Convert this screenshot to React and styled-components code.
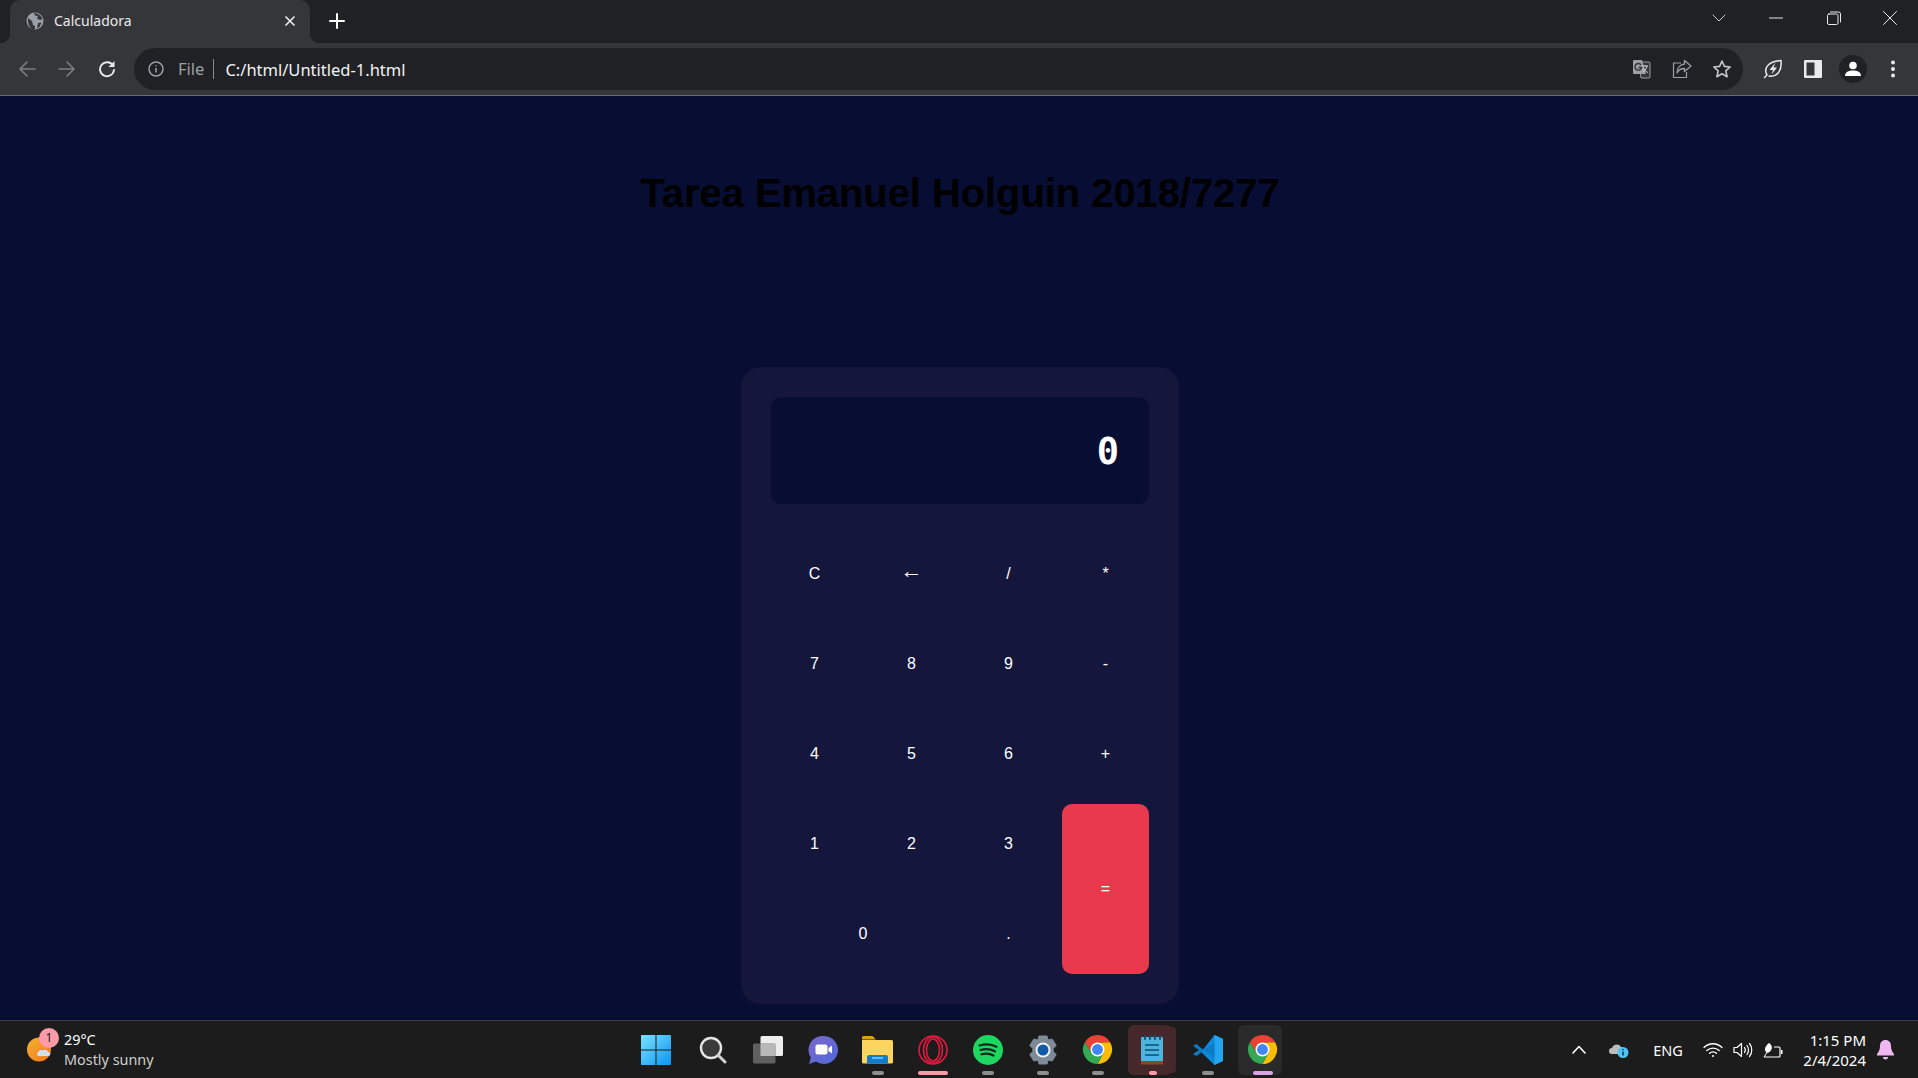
import React from 'react';
import styled, { createGlobalStyle } from 'styled-components';

const GlobalStyle = createGlobalStyle`
    html, body {
        margin: 0;
        height: 100%;
        overflow: hidden;
        background: #070d33;
    }
    * { box-sizing: border-box; }
`;

const uiFont = `"Noto Sans", "Open Sans", sans-serif`;

//#region browser frame
const Screen = styled.div`
    display: flex;
    flex-direction: column;
    height: 100vh;
    font-family: ${uiFont};
`;

const TabStrip = styled.div`
    display: flex;
    align-items: flex-end;
    height: 43px;
    padding-left: 10px;
    background: #202124;
`;

const Tab = styled.div`
    position: relative;
    display: flex;
    align-items: center;
    width: 300px;
    height: 43px;
    padding: 0 14px 2px 16px;
    background: #35363a;
    border-radius: 10px 10px 0 0;
    color: #e8eaed;
    font-size: 14px;

    &::before, &::after {
        content: "";
        position: absolute;
        bottom: 0;
        width: 10px;
        height: 10px;
    }
    &::before {
        left: -10px;
        background: radial-gradient(circle at 0 0, #202124 10px, #35363a 10.5px);
    }
    &::after {
        right: -10px;
        background: radial-gradient(circle at 100% 0, #202124 10px, #35363a 10.5px);
    }
`;

const TabTitle = styled.span`
    flex: 1;
    margin-left: 10px;
`;

const NewTab = styled.div`
    display: flex;
    align-items: center;
    justify-content: center;
    width: 34px;
    height: 43px;
    margin-left: 10px;
    padding-bottom: 2px;
`;

const WindowControls = styled.div`
    display: flex;
    align-self: stretch;
    margin-left: auto;
`;

const WindowButton = styled.div`
    display: flex;
    align-items: center;
    justify-content: center;
    width: ${(p) => p.$width || 56}px;
    height: 36px;
`;

const Toolbar = styled.div`
    display: flex;
    align-items: center;
    height: 53px;
    padding: 0 5px 0 7px;
    background: #35363a;
    border-bottom: 1px solid #6b6c72;
`;

const ToolButton = styled.div`
    display: flex;
    align-items: center;
    justify-content: center;
    flex: none;
    width: 40px;
    height: 40px;
`;

const Omnibox = styled.div`
    display: flex;
    flex: 1;
    align-items: center;
    height: 42px;
    margin: 0 10px 0 7px;
    background: #202124;
    border-radius: 21px;
`;

const InfoSlot = styled.div`
    display: flex;
    align-items: center;
    justify-content: center;
    width: 44px;
`;

const FileLabel = styled.span`
    padding-right: 9px;
    border-right: 1px solid #8a8c90;
    color: #9aa0a6;
    font-size: 16.5px;
    line-height: 20px;
`;

const UrlText = styled.span`
    margin-left: 11px;
    color: #f1f3f4;
    font-size: 16.5px;
`;

const OmniActions = styled.div`
    display: flex;
    margin-left: auto;
    padding-right: 1px;
`;

const Avatar = styled.div`
    display: flex;
    align-items: center;
    justify-content: center;
    width: 28px;
    height: 28px;
    background: #202124;
    border-radius: 50%;
`;
//#endregion

//#region calculator page
const Page = styled.main`
    flex: 1;
    min-height: 0;
    padding-left: 2px;
    background: #070d33;
    font-family: "Liberation Sans", Arial, sans-serif;
`;

const Heading = styled.h1`
    margin: 74px 0 151px;
    color: #000;
    font-size: 39.85px;
    line-height: 46px;
    font-weight: 700;
    text-align: center;
`;

const Calculator = styled.div`
    width: 438px;
    margin: 0 auto;
    padding: 30px;
    background: #14163b;
    border-radius: 20px;
`;

const Display = styled.div`
    display: flex;
    align-items: center;
    justify-content: flex-end;
    height: 107px;
    margin-bottom: 30px;
    padding: 2px 30px 0 0;
    background: #070d33;
    border-radius: 10px;
    color: #fff;
    font-family: "DejaVu Sans Mono", "Liberation Mono", monospace;
    font-size: 37px;
    font-weight: 700;
`;

const Keys = styled.div`
    display: grid;
    grid-template-columns: repeat(4, 87px);
    grid-auto-rows: 80px;
    gap: 10px;
`;

const Key = styled.button`
    grid-column: span ${(p) => p.$cols || 1};
    grid-row: span ${(p) => p.$rows || 1};
    padding: 0 0 ${(p) => p.$lift || 0}px;
    border: none;
    border-radius: 10px;
    background: ${(p) => (p.$accent ? '#e9394c' : 'transparent')};
    color: #fff;
    font-family: "Liberation Sans", Arial, sans-serif;
    font-size: ${(p) => p.$size || 16}px;
`;
//#endregion

//#region taskbar
const Taskbar = styled.footer`
    display: grid;
    grid-template-columns: 1fr 660px 1fr;
    align-items: center;
    height: 58px;
    padding-left: 2px;
    background: #1c1c1c;
    border-top: 1px solid #3e3e3e;
`;

const Weather = styled.div`
    display: flex;
    align-items: center;
    padding-left: 25px;
`;

const WeatherIcon = styled.div`
    position: relative;
    width: 24px;
    height: 25px;
    margin-right: 13px;
`;

const Badge = styled.span`
    position: absolute;
    top: -9px;
    left: 12px;
    width: 20px;
    height: 20px;
    background: #ff9aa8;
    border-radius: 50%;
    color: #1c1c1c;
    font-size: 12px;
    line-height: 20px;
    text-align: center;
`;

const WeatherText = styled.div`
    display: flex;
    flex-direction: column;
    color: #fff;
    font-size: 14.4px;
    line-height: 20px;
`;

const WeatherNote = styled.span`
    color: #cfcfcf;
`;

const AppList = styled.div`
    display: flex;
    height: 100%;
`;

const AppItem = styled.div`
    position: relative;
    display: flex;
    align-items: center;
    justify-content: center;
    width: 55px;
    height: 100%;
    padding-right: ${(p) => p.$nudge || 0}px;

    ${(p) => p.$tile && `
        &::before {
            content: "";
            position: absolute;
            top: 4px;
            left: 3px;
            width: 44px;
            height: 50px;
            border-radius: 6px;
            background: ${p.$tile};
            ${p.$stacked ? `box-shadow: 6px 0 0 -2px ${p.$tile};` : ''}
        }
    `}
    & > svg { position: relative; }
`;

const Pill = styled.span`
    position: absolute;
    bottom: 3px;
    left: 50%;
    width: ${(p) => p.$width || 12}px;
    height: 4px;
    margin-left: ${(p) => -(p.$width || 12) / 2}px;
    background: ${(p) => p.$color || '#8e8e8e'};
    border-radius: 2px;
`;

const Tray = styled.div`
    display: flex;
    align-items: center;
    justify-content: flex-end;
    padding-right: 14px;
    color: #fff;
`;

const TrayItem = styled.div`
    display: flex;
    align-items: center;
    justify-content: center;
    width: ${(p) => p.$width}px;
    font-size: 14.5px;
`;

const Clock = styled.div`
    width: 78px;
    font-size: 15px;
    line-height: 20px;
    text-align: right;
    white-space: nowrap;
`;
//#endregion

const ChromeLogo = () => (
    <svg width="31" height="31" viewBox="0 0 32 32">
        <path d="M3 8.5A15 15 0 0 1 29 8.5L16 9 9.9 19.5Z" fill="#ea4335" />
        <path d="M29 8.5A15 15 0 0 1 16 31L22.1 19.5 16 9Z" fill="#fbbc04" />
        <path d="M16 31A15 15 0 0 1 3 8.5L9.9 19.5 22.1 19.5Z" fill="#34a853" />
        <circle cx="16" cy="16" r="7.2" fill="#fff" />
        <circle cx="16" cy="16" r="5.6" fill="#4285f4" />
    </svg>
);

const keys = [
    { label: 'C' }, { label: '←', size: 22, lift: 6 }, { label: '/' }, { label: '*' },
    { label: '7' }, { label: '8' }, { label: '9' }, { label: '-' },
    { label: '4' }, { label: '5' }, { label: '6' }, { label: '+' },
    { label: '1' }, { label: '2' }, { label: '3' }, { label: '=', rows: 2, accent: true },
    { label: '0', cols: 2 }, { label: '.' },
];

const line = { fill: 'none', stroke: 'currentColor', strokeLinecap: 'round', strokeLinejoin: 'round' };

export default function App() {
    return (
        <Screen>
            <GlobalStyle />
            <TabStrip>
                <Tab>
                    <svg width="18" height="18" viewBox="0 0 18 18">
                        <circle cx="9" cy="9" r="8.5" fill="#9aa0a6" />
                        <path d="M2 6l4 3 1 4 2 1v3l-2 .5C4 16 1.5 12 2 6zM8 1l1 2.5 3 .5-1 2.5 3 1.5 2.5-1C15.5 4 12 1 8 1zM12 11l3.5-.5-2 4.5-2.5 1z" fill="#35363a" />
                    </svg>
                    <TabTitle>Calculadora</TabTitle>
                    <svg width="12" height="12" viewBox="0 0 12 12" style={{ color: '#e8eaed' }}>
                        <path d="M2 2l8 8M10 2l-8 8" {...line} strokeWidth="1.7" />
                    </svg>
                </Tab>
                <NewTab>
                    <svg width="16" height="16" viewBox="0 0 16 16" style={{ color: '#fff' }}>
                        <path d="M8 1v14M1 8h14" {...line} strokeWidth="2" />
                    </svg>
                </NewTab>
                <WindowControls>
                    <WindowButton $width={56}>
                        <svg width="14" height="8" viewBox="0 0 14 8" style={{ color: '#c8c9cb' }}>
                            <path d="M1 1l6 6 6-6" {...line} strokeWidth="1" />
                        </svg>
                    </WindowButton>
                    <WindowButton $width={58}>
                        <svg width="14" height="2" viewBox="0 0 14 2" style={{ color: '#e8eaed' }}>
                            <path d="M0 1h14" {...line} strokeLinecap="butt" strokeWidth="1" />
                        </svg>
                    </WindowButton>
                    <WindowButton $width={57}>
                        <svg width="14" height="14" viewBox="0 0 14 14" style={{ color: '#e8eaed' }}>
                            <rect x=".5" y="3" width="10.5" height="10.5" rx="1.5" {...line} strokeWidth="1" />
                            <path d="M3.5 1h8a2 2 0 0 1 2 2v8" {...line} strokeWidth="1" />
                        </svg>
                    </WindowButton>
                    <WindowButton $width={56}>
                        <svg width="14" height="14" viewBox="0 0 14 14" style={{ color: '#e8eaed' }}>
                            <path d="M.5.5l13 13M13.5.5l-13 13" {...line} strokeWidth="1" />
                        </svg>
                    </WindowButton>
                </WindowControls>
            </TabStrip>

            <Toolbar>
                <ToolButton>
                    <svg width="18" height="18" viewBox="0 0 18 18" style={{ color: '#7d7f83' }}>
                        <path d="M17 9H2M9 2L2 9l7 7" {...line} strokeWidth="1.6" />
                    </svg>
                </ToolButton>
                <ToolButton>
                    <svg width="18" height="18" viewBox="0 0 18 18" style={{ color: '#7d7f83' }}>
                        <path d="M1 9h15M9 2l7 7-7 7" {...line} strokeWidth="1.6" />
                    </svg>
                </ToolButton>
                <ToolButton>
                    <svg width="18" height="18" viewBox="0 0 18 18" style={{ color: '#e8eaed' }}>
                        <path d="M15 5.5A7 7 0 1 0 16 10" {...line} strokeWidth="1.9" />
                        <path d="M16.5 1v6h-6z" fill="currentColor" />
                    </svg>
                </ToolButton>
                <Omnibox>
                    <InfoSlot>
                        <svg width="16" height="16" viewBox="0 0 16 16" style={{ color: '#9aa0a6' }}>
                            <circle cx="8" cy="8" r="7" {...line} strokeWidth="1.5" />
                            <path d="M8 7v4.5M8 4.2v1" {...line} strokeLinecap="butt" strokeWidth="1.6" />
                        </svg>
                    </InfoSlot>
                    <FileLabel>File</FileLabel>
                    <UrlText>C:/html/Untitled-1.html</UrlText>
                    <OmniActions>
                        <ToolButton>
                            <svg width="20" height="20" viewBox="0 0 20 20">
                                <path d="M7 3h10a1 1 0 0 1 1 1v14a1 1 0 0 1-1 1H9z" fill="#35363a" stroke="#9aa0a6" strokeWidth="1" />
                                <path d="M2 1h8l4 14H2a1 1 0 0 1-1-1V2a1 1 0 0 1 1-1z" fill="#9aa0a6" />
                                <path d="M10 7h6M13 6v1M15 7c-.5 3-2.5 5-4 6M11.5 9c.5 2 2.5 3.5 4.5 4.5" fill="none" stroke="#dadce0" strokeWidth="1" />
                                <path d="M9 6a3.3 3.3 0 1 0 .5 2.5H6.500" fill="none" stroke="#35363a" strokeWidth="1.4" />
                            </svg>
                        </ToolButton>
                        <ToolButton>
                            <svg width="20" height="20" viewBox="0 0 20 20" style={{ color: '#9aa0a6' }}>
                                <path d="M9 4H1.5v14.5h13V13" {...line} strokeLinecap="butt" strokeLinejoin="miter" strokeWidth="1.2" />
                                <path d="M12.5 1.5l6.5 5.5-6.500 5.500V9.500C9 9.500 6.500 11 5 14c0-5 3-8.500 7.500-9z" {...line} strokeWidth="1.3" />
                            </svg>
                        </ToolButton>
                        <ToolButton>
                            <svg width="20" height="20" viewBox="0 0 20 20" style={{ color: '#c4c7cb' }}>
                                <path d="M10 2l2.400 5.400 5.800.6-4.400 3.900 1.300 5.800L10 14.700l-5.100 3 1.300-5.800L1.800 8l5.800-.6z" {...line} strokeWidth="1.6" />
                            </svg>
                        </ToolButton>
                    </OmniActions>
                </Omnibox>
                <ToolButton>
                    <svg width="20" height="20" viewBox="0 0 20 20" style={{ color: '#e8eaed' }}>
                        <path d="M1.5 18.5C3 17 3.5 16.5 4 16 .5 10 4 2.500 18 1.500c1 9-3 17-12 15.500" {...line} strokeWidth="1.5" />
                        <path d="M12.500 3.500L6.500 11h3.500l-1.500 4.500 5.500-7h-3.500z" fill="currentColor" />
                    </svg>
                </ToolButton>
                <ToolButton>
                    <svg width="18" height="18" viewBox="0 0 18 18">
                        <rect width="18" height="18" rx="1" fill="#e8eaed" />
                        <rect x="2.5" y="2.5" width="8" height="13" fill="#35363a" />
                    </svg>
                </ToolButton>
                <ToolButton>
                    <Avatar>
                        <svg width="16" height="16" viewBox="0 0 16 16">
                            <circle cx="8" cy="4.5" r="3.8" fill="#fff" />
                            <path d="M0 15c0-4 3.5-5.500 8-5.500s8 1.500 8 5.500z" fill="#fff" />
                        </svg>
                    </Avatar>
                </ToolButton>
                <ToolButton>
                    <svg width="6" height="18" viewBox="0 0 6 18">
                        <circle cx="3" cy="2.5" r="2" fill="#e8eaed" />
                        <circle cx="3" cy="9" r="2" fill="#e8eaed" />
                        <circle cx="3" cy="15.5" r="2" fill="#e8eaed" />
                    </svg>
                </ToolButton>
            </Toolbar>

            <Page>
                <Heading>Tarea Emanuel Holguin 2018/7277</Heading>
                <Calculator>
                    <Display>0</Display>
                    <Keys>
                        {keys.map((key) => (
                            <Key key={key.label} $cols={key.cols} $rows={key.rows} $accent={key.accent} $size={key.size} $lift={key.lift}>
                                {key.label}
                            </Key>
                        ))}
                    </Keys>
                </Calculator>
            </Page>

            <Taskbar>
                <Weather>
                    <WeatherIcon>
                        <svg width="24" height="25" viewBox="0 0 24 25">
                            <defs>
                                <linearGradient id="sun" x1="0" y1="0" x2="1" y2="1">
                                    <stop offset="0" stopColor="#f3b32e" />
                                    <stop offset="1" stopColor="#f5761a" />
                                </linearGradient>
                            </defs>
                            <circle cx="12" cy="12.5" r="12" fill="url(#sun)" />
                            <path d="M12 19c-2 0-3-2.500-1-3.500.5-2 3-3 5-2 2-1.500 4.500-.5 5 1.500 3 0 3 4 0 4z" fill="#cfe0f7" />
                        </svg>
                        <Badge>1</Badge>
                    </WeatherIcon>
                    <WeatherText>
                        <span>29°C</span>
                        <WeatherNote>Mostly sunny</WeatherNote>
                    </WeatherText>
                </Weather>

                <AppList>
                    <AppItem $nudge={3}>
                        <svg width="30" height="30" viewBox="0 0 30 30">
                            <defs>
                                <linearGradient id="win" x1="0" y1="0" x2="1" y2="1">
                                    <stop offset="0" stopColor="#7ae3ff" />
                                    <stop offset="1" stopColor="#0a94f2" />
                                </linearGradient>
                            </defs>
                            <path d="M0 1a1 1 0 0 1 1-1h13.5v14.500H0zM15.5 0H29a1 1 0 0 1 1 1v13.500H15.500zM0 15.500h14.500V30H1a1 1 0 0 1-1-1zM15.500 15.500H30V29a1 1 0 0 1-1 1H15.500z" fill="url(#win)" />
                        </svg>
                    </AppItem>
                    <AppItem>
                        <svg width="28" height="28" viewBox="0 0 28 28">
                            <circle cx="12" cy="12" r="10" fill="#3a3a3a" stroke="#e4e4e4" strokeWidth="2.4" />
                            <path d="M19.5 19.5L26 26" stroke="#d0d0d0" strokeWidth="3" strokeLinecap="round" />
                        </svg>
                    </AppItem>
                    <AppItem>
                        <svg width="30" height="28" viewBox="0 0 30 28">
                            <rect x="7.5" y="0" width="22.5" height="20" rx="1.5" fill="#ededed" />
                            <rect x="0" y="7.5" width="22.5" height="20" rx="1.5" fill="#666" fillOpacity=".92" />
                            <rect x="7.5" y="7.5" width="15" height="12.5" fill="#b8b8b8" />
                        </svg>
                    </AppItem>
                    <AppItem>
                        <svg width="30" height="30" viewBox="0 0 30 30">
                            <defs>
                                <linearGradient id="chat" x1="0" y1="0" x2="1" y2="1">
                                    <stop offset="0" stopColor="#7b68c8" />
                                    <stop offset="1" stopColor="#4f68dc" />
                                </linearGradient>
                            </defs>
                            <path d="M16 1a14 14 0 1 1-8 25.500L1 29l1.800-6.500A14 14 0 0 1 16 1z" fill="url(#chat)" />
                            <rect x="7.5" y="9.5" width="12" height="10" rx="2" fill="#fff" />
                            <path d="M20.5 13l3.500-2.500v8L20.500 16z" fill="#fff" />
                        </svg>
                    </AppItem>
                    <AppItem>
                        <svg width="31" height="28" viewBox="0 0 31 28">
                            <path d="M0 1.5A1.5 1.5 0 0 1 1.5 0h9l3.500 3.500H0z" fill="#d9a110" />
                            <path d="M0 4h29.5A1.5 1.5 0 0 1 31 5.500V26a1.500 1.500 0 0 1-1.500 1.500h-28A1.500 1.500 0 0 1 0 26z" fill="#fdd55e" />
                            <path d="M5 27.5V21a2 2 0 0 1 2-2h17a2 2 0 0 1 2 2v6.500z" fill="#0f7ccf" />
                            <path d="M10 22h11" stroke="#7ed0ff" strokeWidth="1.5" />
                        </svg>
                        <Pill />
                    </AppItem>
                    <AppItem>
                        <svg width="30" height="30" viewBox="0 0 30 30" fill="none" stroke="#e3183f" strokeWidth="1.6">
                            <circle cx="15" cy="15" r="14" />
                            <ellipse cx="15" cy="15" rx="6.5" ry="11" />
                            <ellipse cx="15" cy="15" rx="9.5" ry="13" />
                        </svg>
                        <Pill $width={30} $color="#ff9aa8" />
                    </AppItem>
                    <AppItem>
                        <svg width="30" height="30" viewBox="0 0 30 30">
                            <circle cx="15" cy="15" r="15" fill="#1ed760" />
                            <path d="M6.5 10.5c6-1.800 12-1.500 17 1.200M7.500 15c5-1.400 10-1 14.500 1.400M8.500 19.300c4-1.100 8.500-.8 12 1.200" fill="none" stroke="#14261a" strokeWidth="2.2" strokeLinecap="round" />
                        </svg>
                        <Pill />
                    </AppItem>
                    <AppItem>
                        <svg width="30" height="30" viewBox="0 0 30 30">
                            <path d="M11 1h8l1.200 4 4-1 4 6.500-3 3v3l3 3-4 6.500-4-1L19 29h-8l-1.200-4-4 1-4-6.500 3-3v-3l-3-3 4-6.500 4 1z" fill="#7e8a97" stroke="#7e8a97" strokeLinejoin="round" />
                            <circle cx="15" cy="15" r="7.5" fill="#f1f1f1" />
                            <circle cx="15" cy="15" r="5.5" fill="#1259a8" />
                        </svg>
                        <Pill />
                    </AppItem>
                    <AppItem>
                        <ChromeLogo />
                        <Pill />
                    </AppItem>
                    <AppItem $tile="#46282a" $stacked>
                        <svg width="23" height="30" viewBox="0 0 23 30">
                            <rect x="0" y="2" width="22" height="27" rx="1" fill="#4cb4dd" />
                            <rect x="0" y="26" width="22" height="3.5" fill="#8a4a20" />
                            <path d="M4 1v3M9 1v3M14 1v3M19 1v3" stroke="#17506e" strokeWidth="2" strokeLinecap="round" />
                            <path d="M4 10h14M4 15h14M4 20h14" stroke="#17688f" strokeWidth="2" />
                        </svg>
                        <Pill $color="#ff9aa8" $width={8} />
                    </AppItem>
                    <AppItem>
                        <svg width="30" height="30" viewBox="0 0 30 30">
                            <path d="M21.5 0L30 4v22l-8.500 4L8 17z" fill="#0f88d8" />
                            <path d="M21.5 0v30l8.500-4V4z" fill="#22a6f0" />
                            <path d="M3.5 9L0 11l6 4-6 4 3.500 2 18-13.500V22.500L8 13z" fill="#0d7cc7" />
                        </svg>
                        <Pill />
                    </AppItem>
                    <AppItem $tile="#2a2a2a">
                        <ChromeLogo />
                        <Pill $width={20} $color="#d8a4e4" />
                    </AppItem>
                </AppList>

                <Tray>
                    <TrayItem $width={40}>
                        <svg width="14" height="9" viewBox="0 0 14 9" style={{ color: '#fff' }}>
                            <path d="M1 8l6-6.500L13 8" {...line} strokeWidth="1.6" />
                        </svg>
                    </TrayItem>
                    <TrayItem $width={40}>
                        <svg width="20" height="16" viewBox="0 0 20 16">
                            <path d="M3 12a3 3 0 0 1 0-6c1-4 7-5 9-1 2.500 0 3.500 2 3.500 4l-3 3z" fill="#bdbdbd" />
                            <circle cx="14" cy="10.5" r="5.5" fill="#4fc3f7" />
                            <path d="M14 9.5v4M14 7v1.200" stroke="#10232e" strokeWidth="1.4" />
                        </svg>
                    </TrayItem>
                    <TrayItem $width={58}>ENG</TrayItem>
                    <TrayItem $width={31}>
                        <svg width="20" height="16" viewBox="0 0 20 16" fill="none" stroke="#fff" strokeWidth="1.3" strokeLinecap="round">
                            <path d="M1 5.5c5-5 13-5 18 0M3.800 8.500c3.500-3.300 9-3.300 12.400 0M6.500 11.300c2-1.800 5-1.800 7 0" />
                            <circle cx="10" cy="14" r="1" fill="#fff" stroke="none" />
                        </svg>
                    </TrayItem>
                    <TrayItem $width={30}>
                        <svg width="20" height="16" viewBox="0 0 20 16" fill="none" stroke="#fff" strokeWidth="1.2" strokeLinejoin="round" strokeLinecap="round">
                            <path d="M1 5.5h3L8.500 1.500v13L4 10.500H1z" />
                            <path d="M11.5 5.5c1 1.500 1 3.500 0 5M14 3.500c2 2.500 2 6.500 0 9M16.500 1.500c3 3.500 3 9.500 0 13" />
                        </svg>
                    </TrayItem>
                    <TrayItem $width={30}>
                        <svg width="20" height="16" viewBox="0 0 20 16">
                            <path d="M7 15H16a1 1 0 0 0 1-1V6a1 1 0 0 0-1-1H11" fill="none" stroke="#fff" strokeWidth="1.2" />
                            <path d="M18 8h1.500v4H18z" fill="#fff" />
                            <path d="M6 1c3 2 4 5 1.500 8-1 1.500-3 2-4 1.500C.5 8 2.500 3.500 6 1z" fill="#fff" />
                            <path d="M1 15l4-6M1 15h6" stroke="#fff" strokeWidth="1" />
                        </svg>
                    </TrayItem>
                    <Clock>
                        1:15 PM
                        <br />
                        2/4/2024
                    </Clock>
                    <TrayItem $width={38}>
                        <svg width="17" height="20" viewBox="0 0 17 20">
                            <path d="M8.5 0C5 0 3 2.500 3 6c0 4-1.500 6-3 8v1.500h17V14c-1.500-2-3-4-3-8 0-3.500-2-6-5.500-6z" fill="#efb8f0" />
                            <path d="M6 17h5a2.500 2.500 0 0 1-5 0z" fill="#efb8f0" />
                        </svg>
                    </TrayItem>
                </Tray>
            </Taskbar>
        </Screen>
    );
}
